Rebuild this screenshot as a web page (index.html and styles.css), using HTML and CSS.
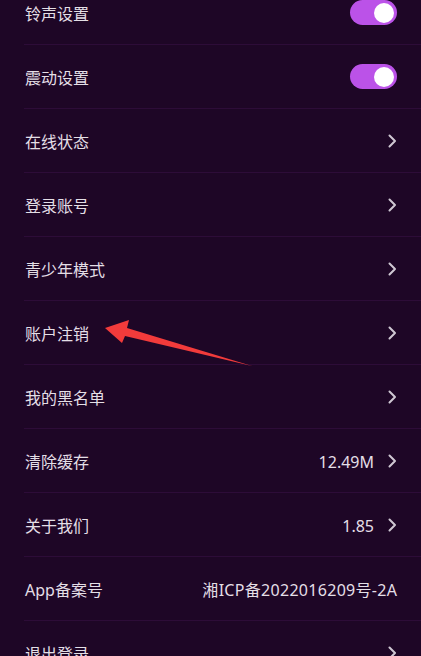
FILE: index.html
```html
<!DOCTYPE html>
<html lang="zh">
<head>
<meta charset="utf-8">
<link rel="stylesheet" href="styles.css">
</head>
<body>
<div class="list">
  <div class="row"><span class="label">铃声设置</span><span class="toggle"><span class="knob"></span></span></div>
  <div class="row"><span class="label">震动设置</span><span class="toggle"><span class="knob"></span></span></div>
  <div class="row"><span class="label">在线状态</span><svg class="chev" viewBox="0 0 9 14"><path d="M1.5 1.5 L7 7 L1.5 12.5"/></svg></div>
  <div class="row"><span class="label">登录账号</span><svg class="chev" viewBox="0 0 9 14"><path d="M1.5 1.5 L7 7 L1.5 12.5"/></svg></div>
  <div class="row"><span class="label">青少年模式</span><svg class="chev" viewBox="0 0 9 14"><path d="M1.5 1.5 L7 7 L1.5 12.5"/></svg></div>
  <div class="row"><span class="label">账户注销</span><svg class="chev" viewBox="0 0 9 14"><path d="M1.5 1.5 L7 7 L1.5 12.5"/></svg></div>
  <div class="row"><span class="label">我的黑名单</span><svg class="chev" viewBox="0 0 9 14"><path d="M1.5 1.5 L7 7 L1.5 12.5"/></svg></div>
  <div class="row"><span class="label">清除缓存</span><span class="right"><span class="value">12.49M</span><svg class="chev" viewBox="0 0 9 14"><path d="M1.5 1.5 L7 7 L1.5 12.5"/></svg></span></div>
  <div class="row"><span class="label">关于我们</span><span class="right"><span class="value">1.85</span><svg class="chev" viewBox="0 0 9 14"><path d="M1.5 1.5 L7 7 L1.5 12.5"/></svg></span></div>
  <div class="row"><span class="label">App备案号</span><span class="value icp">湘ICP备2022016209号-2A</span></div>
  <div class="row"><span class="label">退出登录</span><svg class="chev" viewBox="0 0 9 14"><path d="M1.5 1.5 L7 7 L1.5 12.5"/></svg></div>
</div>
<svg class="annot" width="421" height="656" viewBox="0 0 421 656">
  <polygon points="105,328 129,320 127,328 252,366 125,336 122,343" fill="#f23b3b"/>
</svg>
</body>
</html>
```
FILE: styles.css
```css
html, body {
  margin: 0;
  padding: 0;
  background: #1e0626;
  overflow: hidden;
  height: 656px;
}
body {
  position: relative;
  font-family: "Noto Sans", "Noto Sans CJK SC", sans-serif;
  color: #e4dfe6;
}
.list {
  margin-top: -19px;
}
.row {
  height: 63px;
  margin-left: 24px;
  padding: 0 24px 0 1px;
  border-bottom: 1px solid #2d0c38;
  display: flex;
  align-items: center;
  justify-content: space-between;
}
.label {
  font-size: 16px;
  line-height: 20px;
  padding-top: 2px;
}
.value {
  font-size: 16px;
  line-height: 20px;
  padding-top: 2px;
}
.icp {
  letter-spacing: 0.3px;
  margin-right: -0.3px;
}
.right {
  display: flex;
  align-items: center;
  gap: 14px;
}
.chev {
  width: 9px;
  height: 14px;
  fill: none;
  stroke: #cfc8d3;
  stroke-width: 2;
  stroke-linecap: round;
  stroke-linejoin: round;
}
.toggle {
  width: 47px;
  height: 25px;
  border-radius: 13px;
  background: #bb52e8;
  display: flex;
  align-items: center;
  justify-content: flex-end;
  padding-right: 3px;
  box-sizing: border-box;
}
.knob {
  width: 20px;
  height: 20px;
  border-radius: 50%;
  background: #ffffff;
}
.annot {
  position: absolute;
  left: 0;
  top: 0;
  pointer-events: none;
}
```
